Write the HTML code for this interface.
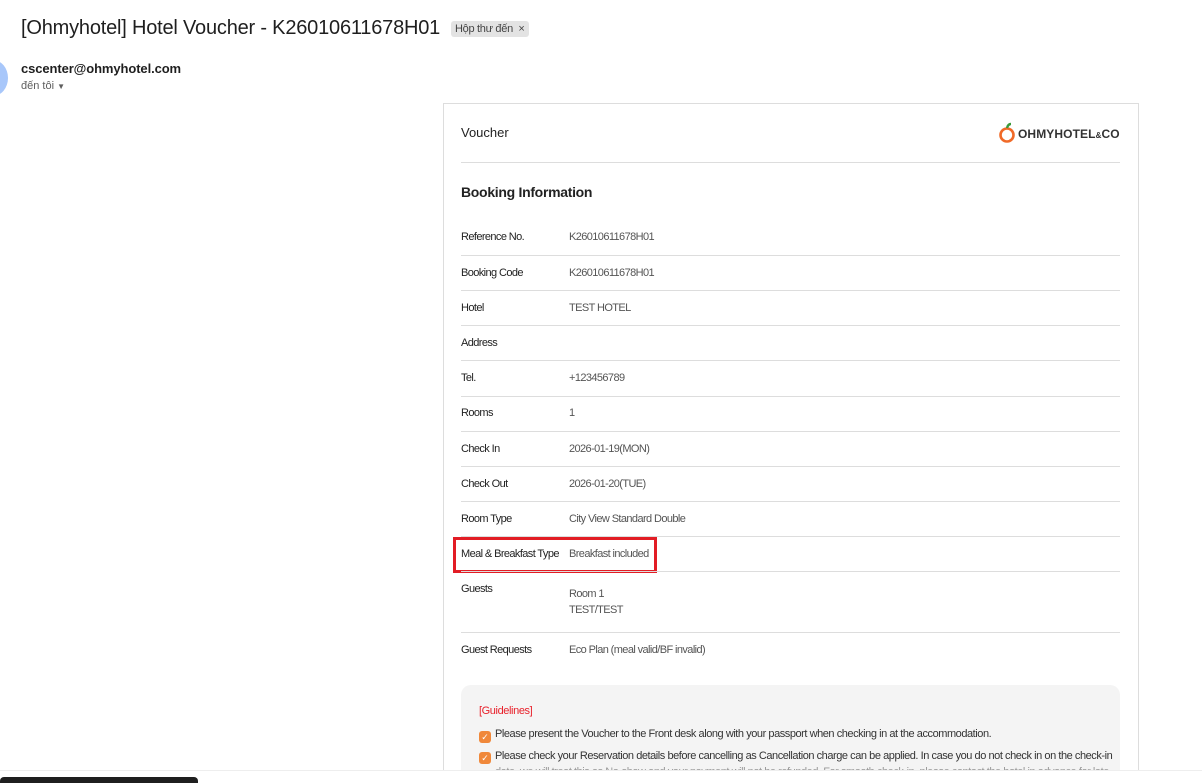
<!DOCTYPE html>
<html style="overflow:hidden"><head><meta charset="utf-8"><style>
html,body{margin:0;width:1202px;height:783px;overflow:hidden}
body{background:#fff;font-family:"Liberation Sans",sans-serif;position:relative}
.a{position:absolute;white-space:nowrap}
.l{position:absolute;left:461px;font-size:11px;color:#222;letter-spacing:-0.6px}
.v{position:absolute;left:569px;font-size:11px;color:#555;letter-spacing:-0.6px}
.hr{position:absolute;left:461px;width:659px;height:1px;background:#ddd}
.cb{position:absolute;left:479px;width:12px;height:12px;border-radius:3px;background:#f0883a;color:#fff;font-size:9px;text-align:center;line-height:12px}
.g{position:absolute;left:495px;font-size:11px;color:#333;letter-spacing:-0.45px}
</style></head><body>
<div class="a" style="left:21px;top:17px;font-size:20px;letter-spacing:-0.2px;color:#1f1f1f">[Ohmyhotel] Hotel Voucher - K26010611678H01</div>
<div class="a" style="left:451px;top:21px;height:16px;padding:0 4px;background:#e3e3e3;border-radius:3px;font-size:11px;color:#444;line-height:16px;letter-spacing:-0.3px">Hộp thư đến &nbsp;×</div>
<div class="a" style="left:-22px;top:60px;width:30px;height:36px;border-radius:50%;background:#a8c7fa"></div>
<div class="a" style="left:21px;top:61px;font-size:13px;font-weight:bold;color:#1f1f1f;letter-spacing:-0.1px">cscenter@ohmyhotel.com</div>
<div class="a" style="left:21px;top:80px;font-size:11px;color:#5e5e5e">đến tôi <span style="font-size:8px">▼</span></div>

<div class="a" style="left:443px;top:103px;width:694px;height:680px;border:1px solid #ddd;border-bottom:none"></div>
<div class="a" style="left:461px;top:125px;font-size:13px;color:#222">Voucher</div>
<svg class="a" style="left:998px;top:121px" width="20" height="24" viewBox="0 0 20 24"><circle cx="9" cy="14" r="6.5" fill="none" stroke="#f06a28" stroke-width="2.6"/><path d="M9 7 Q10 3 13 3" stroke="#3a9a3a" stroke-width="2.4" fill="none"/></svg>
<div class="a" style="left:1018px;top:127px;font-size:12px;font-weight:bold;color:#333;letter-spacing:0.1px">OHMYHOTEL<span style="font-size:8px">&amp;</span>CO</div>
<div class="hr" style="top:162px"></div>
<div class="a" style="left:461px;top:184px;font-size:14px;font-weight:bold;color:#222;letter-spacing:-0.3px">Booking Information</div>

<div class="l" style="top:231px">Reference No.</div><div class="v" style="top:231px">K26010611678H01</div>
<div class="hr" style="top:255px"></div>
<div class="l" style="top:267px">Booking Code</div><div class="v" style="top:267px">K26010611678H01</div>
<div class="hr" style="top:290px"></div>
<div class="l" style="top:302px">Hotel</div><div class="v" style="top:302px">TEST HOTEL</div>
<div class="hr" style="top:325px"></div>
<div class="l" style="top:337px">Address</div>
<div class="hr" style="top:360px"></div>
<div class="l" style="top:372px">Tel.</div><div class="v" style="top:372px">+123456789</div>
<div class="hr" style="top:396px"></div>
<div class="l" style="top:407px">Rooms</div><div class="v" style="top:407px">1</div>
<div class="hr" style="top:431px"></div>
<div class="l" style="top:443px">Check In</div><div class="v" style="top:443px">2026-01-19(MON)</div>
<div class="hr" style="top:466px"></div>
<div class="l" style="top:478px">Check Out</div><div class="v" style="top:478px">2026-01-20(TUE)</div>
<div class="hr" style="top:501px"></div>
<div class="l" style="top:513px">Room Type</div><div class="v" style="top:513px">City View Standard Double</div>
<div class="hr" style="top:536px"></div>
<div class="l" style="top:548px">Meal &amp; Breakfast Type</div><div class="v" style="top:548px">Breakfast included</div>
<div class="a" style="left:453px;top:537px;width:198px;height:30px;border:3px solid #e21d25"></div>
<div class="hr" style="top:571px"></div>
<div class="l" style="top:583px">Guests</div><div class="v" style="top:588px">Room 1</div><div class="v" style="top:604px">TEST/TEST</div>
<div class="hr" style="top:632px"></div>
<div class="l" style="top:644px">Guest Requests</div><div class="v" style="top:644px">Eco Plan (meal valid/BF invalid)</div>

<div class="a" style="left:461px;top:685px;width:659px;height:98px;background:#f4f4f4;border-radius:10px 10px 0 0"></div>
<div class="a" style="left:479px;top:705px;font-size:11px;color:#e8202a;letter-spacing:-0.4px">[Guidelines]</div>
<div class="cb" style="top:731px">✓</div><div class="g" style="top:728px">Please present the Voucher to the Front desk along with your passport when checking in at the accommodation.</div>
<div class="cb" style="top:752px">✓</div><div class="g" style="top:750px">Please check your Reservation details before cancelling as Cancellation charge can be applied. In case you do not check in on the check-in</div>
<div class="g" style="top:766px;left:495px;color:#999">date, we will treat this as No-show and your payment will not be refunded. For smooth check-in, please contact the hotel in advance for late</div>
<div class="a" style="left:0;top:770px;width:1202px;height:13px;background:#fff;border-top:1px solid #eee"></div>
<div class="a" style="left:0;top:777px;width:198px;height:6px;background:#1f1f1f;border-radius:4px 4px 0 0"></div>
</body></html>
